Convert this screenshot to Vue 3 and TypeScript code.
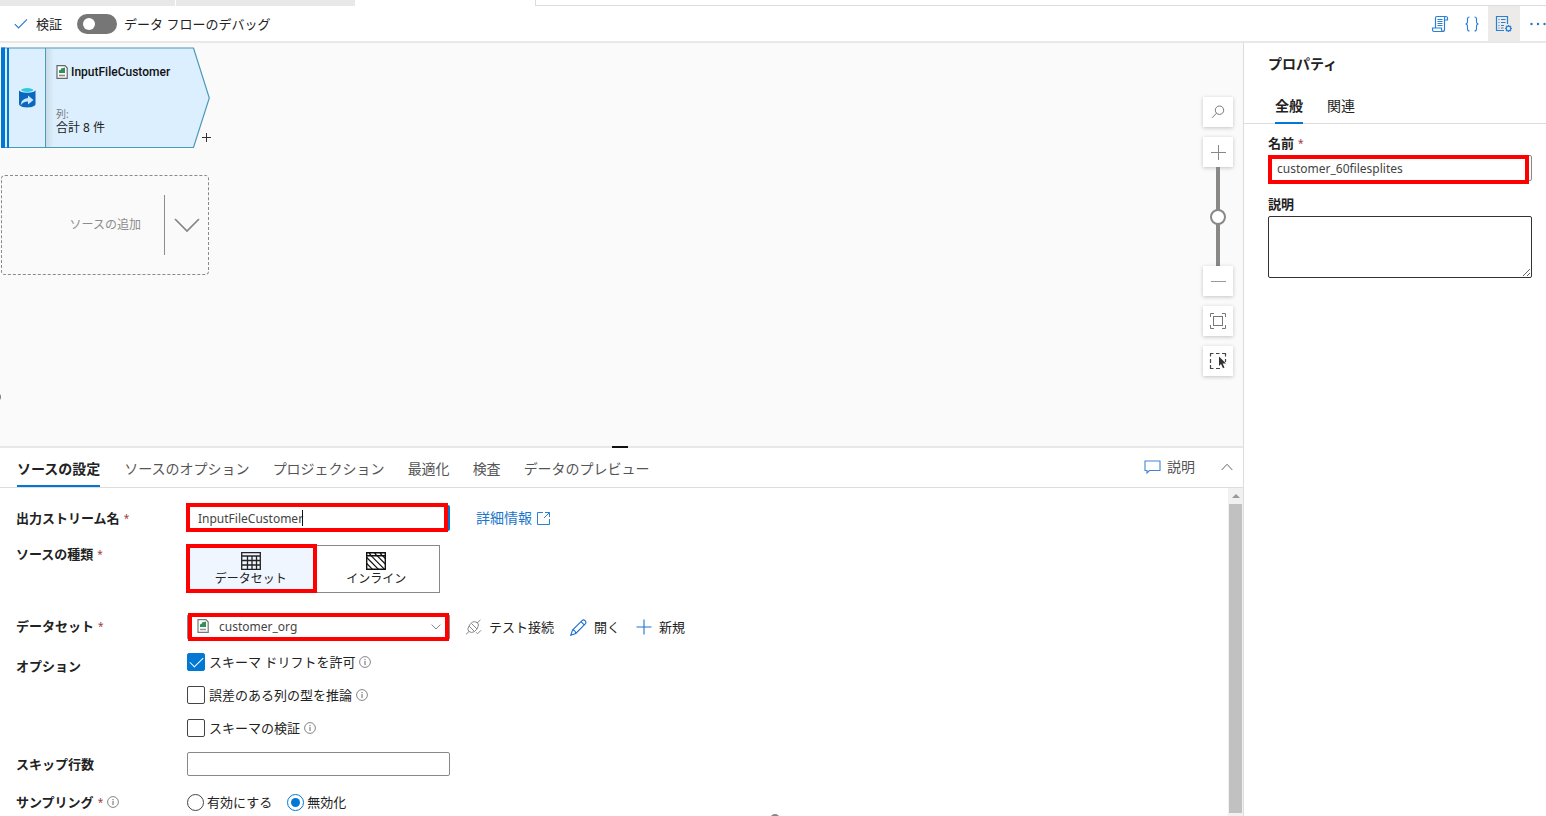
<script setup lang="ts">
import { ref } from 'vue'

const debug = ref(false)
const zoom = ref(50)
const streamName = ref('InputFileCustomer')
const sourceType = ref('dataset')
const dataset = ref('customer_org')
const skipLines = ref('')
const sampling = ref('off')
const flowName = ref('customer_60filesplites')
const description = ref('')
const activeTab = ref('ソースの設定')
const activeProp = ref('全般')

const tabs: string[] = ['ソースの設定', 'ソースのオプション', 'プロジェクション', '最適化', '検査', 'データのプレビュー']
const propTabs: string[] = ['全般', '関連']
const options = ref([
  { id: 'drift', label: 'スキーマ ドリフトを許可', on: true },
  { id: 'infer', label: '誤差のある列の型を推論', on: false },
  { id: 'validate', label: 'スキーマの検証', on: false },
])
</script>

<template>
  <div class="page">
    <div class="strip">
      <span class="strip-tab"></span>
      <span class="strip-tab"></span>
      <span class="strip-tab current"></span>
      <span class="strip-rest"></span>
    </div>

    <header class="toolbar">
      <button class="validate" type="button">
        <svg width="14" height="12" viewBox="0 0 14 12"><path d="M.8 6.2 4.6 10 13 1.4" fill="none" stroke="#2f7cd0" stroke-width="1.2" /></svg>
        検証
      </button>
      <button id="debug" class="switch" type="button" role="switch" :aria-checked="debug" @click="debug = !debug"><i></i></button>
      <label for="debug">データ フローのデバッグ</label>
      <div class="tools">
        <button type="button" aria-label="スクリプト">
          <svg width="18" height="18" viewBox="0 0 18 18" fill="none" stroke="#2b80d2" stroke-width="1.2">
            <path d="M4.500 12.500V3Q4.500 1.500 6 1.500H15.500M13.500 5V14.500Q13.500 16.500 11.500 16.500H3Q1.500 16.500 1.500 14.500V13H10.500V14.500Q10.500 16.500 12 16.500M13.500 5H16.500V3Q16.500 1.500 15 1.500T13.500 3V5" />
            <path d="M6.500 4.500H11.500M6.500 6.500H11.500M6.500 8.500H11.500M6.500 10.500H11.500" />
          </svg>
        </button>
        <button type="button" aria-label="コード">
          <svg width="16" height="18" viewBox="0 0 16 18" fill="none" stroke="#2b80d2" stroke-width="1.1">
            <path d="M5.500 2Q3.500 2 3.500 4V6.500Q3.500 9 1.500 9Q3.500 9 3.500 11.500V14Q3.500 16 5.500 16M10.500 2Q12.500 2 12.500 4V6.500Q12.500 9 14.500 9Q12.500 9 12.500 11.500V14Q12.500 16 10.500 16" />
          </svg>
        </button>
        <button class="active" type="button" aria-label="プロパティ">
          <svg width="18" height="18" viewBox="0 0 18 18" fill="none" stroke="#2b80d2" stroke-width="1.2">
            <path d="M9 15.500H1.500V1.500H12.500V9M3.500 4.500H4.500M6 4.500H10.500M3.500 7.500H4.500M6 7.500H10.500M3.500 10.500H4.500M6 10.500H9M3.500 13H4.500M6 13H8.500" />
            <circle cx="13.500" cy="13.500" r="2.300" />
            <path d="M13.500 10V11.200M13.500 15.800V17M10 13.500H11.200M15.800 13.500H17M11 11 11.900 11.900M15.100 15.100 16 16M16 11 15.100 11.900M11 16 11.900 15.100" />
          </svg>
        </button>
        <button class="more" type="button" aria-label="その他">
          <svg width="16" height="4" viewBox="0 0 16 4" fill="#1b76cc"><circle cx="1.500" cy="2" r="1.200" /><circle cx="8" cy="2" r="1.200" /><circle cx="14.500" cy="2" r="1.200" /></svg>
        </button>
      </div>
    </header>

    <div class="body">
      <main class="work">
        <section class="canvas">
          <div class="node">
            <svg class="node-shape" width="209" height="102" viewBox="0 0 209 102">
              <defs>
                <linearGradient id="fold"><stop offset="0" stop-color="#cbdbe7" /><stop offset="1" stop-color="#dceffe" /></linearGradient>
              </defs>
              <path d="M1 1H192.500L208.300 51 192.500 100.500H1Z" fill="#dceffe" stroke="#4a9ab8" stroke-width="1.200" />
              <path d="M45 2H53V100H45Z" fill="url(#fold)" />
              <path d="M44.500 1V100.500" stroke="#4a9ab8" />
              <path d="M0 .5H4V101H0Z" fill="#0078d4" />
              <path d="M7 1V101" stroke="#0078d4" stroke-width="2" />
              <path d="M18 43.500V57C18 61.500 34.500 61.500 34.500 57V43.500Z" fill="#0b66bd" />
              <ellipse cx="26.200" cy="43" rx="8.200" ry="2.800" fill="#d8f4fc" />
              <ellipse cx="26.200" cy="43" rx="6" ry="1.900" fill="#32c8e4" />
              <path d="M19.500 58.500Q20 51.500 27 51V48.500L32.500 53 27 57.500V54.500Q22 54.500 19.500 58.500Z" fill="#c9e8fb" />
            </svg>
            <div class="node-title">
              <svg class="file" width="12" height="14" viewBox="0 0 12 14"><path d="M1 .7H9L11.200 3V13.300H1Z" fill="#fff" stroke="#666" stroke-width="1.200" /><path d="M3 8V5.500L5 4.500V3.500L9 2.500V8Z" fill="#2f9157" /><path d="M3 10.500H9" stroke="#888" stroke-width="1.600" /></svg>
              InputFileCustomer
            </div>
            <div class="node-info"><small>列:</small><span>合計 8 件</span></div>
            <button class="node-add" type="button" aria-label="追加">
              <svg width="9" height="9" viewBox="0 0 9 9"><path d="M4.500 0V9M0 4.500H9" stroke="#333" /></svg>
            </button>
          </div>

          <button class="add-source" type="button">
            <span>ソースの追加</span>
            <i></i>
            <svg width="26" height="15" viewBox="0 0 26 15"><path d="M1 1 13 13 25 1" fill="none" stroke="#858585" stroke-width="1.700" /></svg>
          </button>

          <span class="knob-left"></span>

          <div class="zoom">
            <button type="button" aria-label="検索">
              <svg width="14" height="14" viewBox="0 0 14 14" fill="none" stroke="#777"><circle cx="8.500" cy="5.200" r="4.200" /><path d="M5.500 8.200 1 12.800" /></svg>
            </button>
            <div class="zoom-bar">
              <button type="button" aria-label="拡大"><svg width="15" height="15" viewBox="0 0 15 15"><path d="M7.500 0V15M0 7.500H15" stroke="#888" /></svg></button>
              <input v-model="zoom" type="range" min="0" max="100" aria-label="ズーム" />
              <button type="button" aria-label="縮小"><svg width="15" height="15" viewBox="0 0 15 15"><path d="M0 7.500H15" stroke="#999" /></svg></button>
            </div>
            <button type="button" aria-label="全体表示">
              <svg width="16" height="16" viewBox="0 0 16 16" fill="none" stroke="#777"><path d="M.5 4V.5H4M12 .5H15.500V4M15.500 12V15.500H12M4 15.500H.5V12" /><rect x="3.500" y="3.500" width="9" height="9" /></svg>
            </button>
            <button type="button" aria-label="範囲選択">
              <svg width="18" height="18" viewBox="0 0 18 18" fill="none" stroke="#444" stroke-width="1.200"><path d="M1.500 4.500V1.500H4.500M7 1.500H10.500M13 1.500H16.500V4.500M16.500 7V10M1.500 7V11M1.500 13V16.500H4.500M7 16.500H11" /><path d="M10 4.500V14L12 12 14 16.300 15.500 15.600 13.700 11.400H17Z" fill="#333" stroke="none" /></svg>
            </button>
          </div>
        </section>

        <section class="panel">
          <span class="grip"></span>
          <nav class="tabs">
            <button v-for="t in tabs" :key="t" type="button" :class="{ on: t === activeTab }" @click="activeTab = t">{{ t }}</button>
            <div class="tabs-end">
              <button type="button">
                <svg width="17" height="14" viewBox="0 0 17 14"><path d="M1 1H16V10.500H5.500L3 13V10.500H1Z" fill="none" stroke="#3d87d6" stroke-width="1.100" /></svg>
                説明
              </button>
              <button type="button" aria-label="折りたたむ"><svg width="12" height="8" viewBox="0 0 12 8"><path d="M.7 7 6 1.300 11.300 7" fill="none" stroke="#666" /></svg></button>
            </div>
          </nav>

          <div class="scroll">
            <form class="form" @submit.prevent>
              <div class="row">
                <label class="name" for="stream">出力ストリーム名 <b>*</b></label>
                <div class="field focus marked"><input id="stream" v-model="streamName" type="text" /><span class="caret"></span></div>
                <a class="info-link" href="#">詳細情報
                  <svg width="13" height="13" viewBox="0 0 13 13" fill="none" stroke="#2b80d2"><path d="M6 .5H.5V12.500H12.500V7M8 .5H12.500V5M12.500.5 7 6" /></svg>
                </a>
              </div>

              <div class="row types-row">
                <span id="type-label" class="name">ソースの種類 <b>*</b></span>
                <div class="types" role="group" aria-labelledby="type-label">
                  <button type="button" class="marked" :class="{ on: sourceType === 'dataset' }" @click="sourceType = 'dataset'">
                    <svg width="20" height="18" viewBox="0 0 20 18" fill="none" stroke="#222" stroke-width="1.300"><path d="M.7.7H19.300V17.300H.7ZM.7 4H19.300M.7 8.500H19.300M.7 13H19.300M6.500 4V17.300M11 4V17.300M15.500 4V17.300" /></svg>
                    データセット
                  </button>
                  <button type="button" :class="{ on: sourceType === 'inline' }" @click="sourceType = 'inline'">
                    <svg width="20" height="18" viewBox="0 0 20 18" fill="none" stroke="#111" stroke-width="1.400"><path d="M.7.7H19.300V17.300H.7ZM.7 3.700H19.300M3 .7 5 3.700M8.500 .7 10.500 3.700M14 .7 16 3.700" /><path stroke-width="1.200" d="M.7 11.500 6.500 17.300M.7 5.500 12.500 17.300M5 3.700 18.600 17.300M11 3.700 19.300 12M16.500 3.700 19.300 6.500" /></svg>
                    インライン
                  </button>
                </div>
              </div>

              <div class="row dataset-row">
                <label class="name" for="dataset">データセット <b>*</b></label>
                <div class="field pick marked">
                  <svg class="file" width="12" height="14" viewBox="0 0 12 14"><path d="M1 .7H9L11.200 3V13.300H1Z" fill="#fff" stroke="#777" stroke-width="1.200" /><path d="M3 8V5.500L5 4.500V3.500L9 2.500V8Z" fill="#2f9157" /><path d="M3 10.500H9" stroke="#999" stroke-width="1.600" /></svg>
                  <select id="dataset" v-model="dataset"><option>customer_org</option></select>
                  <svg class="arrow" width="10" height="6" viewBox="0 0 10 6"><path d="M.6.600 5 5 9.400.6" fill="none" stroke="#888" /></svg>
                </div>
                <div class="actions">
                  <button type="button">
                    <svg width="17" height="16" viewBox="0 0 17 16" fill="none" stroke="#8a8a8a"><path d="M4 7 9.500 12.500Q6.500 14.500 4 12.500T4 7ZM4 7Q7 1.500 11 3T13 7.500Q12.500 10.500 9.500 12.500M6.500 4.500 12 10M12 4 15.500.8M4 12.500 1 15.300M11 13.300 12.500 14.800 16 11.300" /></svg>
                    テスト接続
                  </button>
                  <button type="button">
                    <svg width="17" height="17" viewBox="0 0 17 17" fill="none" stroke="#1b6fd0" stroke-width="1.100"><path d="M.8 16.200 2.500 11 12.300 1.300Q13.500.2 15 1.700T15.500 4.600L5.800 14.400ZM11 2.700 14.200 5.900M2.500 11Q5.300 11 5.800 14.400" /></svg>
                    開く
                  </button>
                  <button type="button">
                    <svg width="16" height="16" viewBox="0 0 16 16"><path d="M8 .5V15.500M.5 8H15.500" stroke="#1b76cc" stroke-width="1.100" /></svg>
                    新規
                  </button>
                </div>
              </div>

              <div class="row options-row">
                <span id="opt-label" class="name">オプション</span>
                <div class="options" role="group" aria-labelledby="opt-label">
                  <div v-for="o in options" :key="o.id" class="option">
                    <input :id="o.id" v-model="o.on" type="checkbox" />
                    <label :for="o.id">{{ o.label }}</label>
                    <svg class="info" width="12" height="12" viewBox="0 0 12 12"><circle cx="6" cy="6" r="5.400" fill="none" stroke="#777" stroke-width=".9" /><path d="M6 5V9M6 3V4.200" stroke="#666" /></svg>
                  </div>
                </div>
              </div>

              <div class="row skip-row">
                <label class="name" for="skip">スキップ行数</label>
                <div class="field"><input id="skip" v-model="skipLines" type="text" /></div>
              </div>

              <div class="row sample-row">
                <span id="sample-label" class="name">サンプリング <b>*</b>
                  <svg class="info" width="12" height="12" viewBox="0 0 12 12"><circle cx="6" cy="6" r="5.400" fill="none" stroke="#777" stroke-width=".9" /><path d="M6 5V9M6 3V4.200" stroke="#666" /></svg>
                </span>
                <div class="radios" role="radiogroup" aria-labelledby="sample-label">
                  <label><input v-model="sampling" type="radio" name="sampling" value="on" />有効にする</label>
                  <label><input v-model="sampling" type="radio" name="sampling" value="off" />無効化</label>
                </div>
              </div>
            </form>
            <div class="bar"><i class="up"></i><i class="thumb"></i></div>
          </div>
          <span class="knob-bottom"></span>
        </section>
      </main>

      <aside class="props">
        <h2>プロパティ</h2>
        <nav class="prop-tabs">
          <button v-for="t in propTabs" :key="t" type="button" :class="{ on: t === activeProp }" @click="activeProp = t">{{ t }}</button>
        </nav>
        <div class="prop-form">
          <label for="flow">名前 <b>*</b></label>
          <div class="field marked"><input id="flow" v-model="flowName" type="text" /></div>
          <label for="desc">説明</label>
          <textarea id="desc" v-model="description"></textarea>
        </div>
      </aside>
    </div>
  </div>
</template>

<style>
body { margin: 0; background: #fff; }
</style>

<style scoped>
* { box-sizing: border-box; }
.page {
  height: 100vh;
  display: flex;
  flex-direction: column;
  overflow: hidden;
  background: #fff;
  color: #222;
  font: 13px/18px "Noto Sans", "Noto Sans CJK JP", sans-serif;
}
button, input, select, textarea { font: inherit; color: inherit; margin: 0; }
button { padding: 0; border: 0; background: none; cursor: pointer; white-space: nowrap; }
svg { display: block; flex: none; }

.strip { display: flex; flex: none; height: 6px; }
.strip-tab { width: 180px; background: #e8e8e8; border-left: 1px solid #fff; }
.strip-tab:first-child { width: 175px; border: 0; }
.strip-tab.current { background: #fff; border-left: 0; }
.strip-rest { flex: 1; border: solid #ddd; border-width: 0 0 1px 1px; }

.toolbar { display: flex; flex: none; align-items: center; height: 37px; padding-left: 14px; border-bottom: 2px solid #e8e8e8; }
.validate { display: flex; align-items: center; gap: 8px; margin-right: 15px; }
.switch { width: 40px; height: 20px; margin-right: 7px; padding: 0 6px; border-radius: 10px; background: #767676; }
.switch i { display: block; width: 12px; height: 12px; border-radius: 50%; background: #fff; }
.tools { display: flex; align-self: stretch; margin-left: auto; }
.tools button { display: grid; place-items: center; width: 32px; }
.tools .active { background: #edebe9; }
.tools .more { justify-items: start; width: 26px; padding-left: 10px; overflow: hidden; }

.body { display: flex; flex: 1; min-height: 0; }
.work { display: flex; flex: 1; flex-direction: column; min-width: 0; }
.canvas { position: relative; flex: 1; min-height: 0; background: #fafafa; }

.node { position: absolute; left: 1px; top: 4px; width: 209px; height: 102px; font-size: 12px; line-height: 14px; }
.node-shape { position: absolute; inset: 0; }
.node-title { position: absolute; left: 55px; top: 18px; display: flex; align-items: center; gap: 3px; color: #111; font-family: Roboto, "Noto Sans", sans-serif; font-weight: 500; }
.node-info { position: absolute; left: 55px; top: 60px; display: flex; flex-direction: column; color: #222; }
.node-info small { font-size: 10px; color: #777; }
.node-add { position: absolute; left: 201px; top: 86px; }

.add-source { position: absolute; left: 1px; top: 132px; display: flex; align-items: center; width: 208px; height: 100px; padding-right: 8px; border: 1px dashed #8a8a8a; border-radius: 4px; color: #8c8c8c; font-size: 12px; }
.add-source span { margin-left: auto; margin-right: 23px; }
.add-source i { width: 1px; height: 60px; margin-right: 9px; background: #8c8c8c; }
.knob-left { position: absolute; left: -9px; top: 349px; width: 10px; height: 10px; border-radius: 50%; background: #777; }

.zoom { position: absolute; right: 10px; top: 54px; display: flex; flex-direction: column; gap: 10px; }
.zoom button { display: grid; place-items: center; width: 30px; height: 30px; background: #fff; box-shadow: 0 1px 4px rgba(0, 0, 0, .22); }
.zoom-bar { display: flex; flex-direction: column; align-items: center; }
.zoom input { writing-mode: vertical-lr; direction: rtl; appearance: none; width: 16px; height: 99px; background: none; }
.zoom input::-webkit-slider-runnable-track { width: 4px; height: 100%; margin: 0 auto; background: #8a8886; }
.zoom input::-webkit-slider-thumb { appearance: none; width: 16px; height: 16px; margin-left: -6px; border: 2px solid #8a8886; border-radius: 50%; background: #fff; }

.panel { position: relative; display: flex; flex: none; flex-direction: column; border-top: 2px solid #e8e8e8; background: #fff; }
.grip { position: absolute; left: 50%; top: -2px; width: 16px; height: 2px; margin-left: -10px; background: #111; }
.tabs { display: flex; gap: 23px; height: 40px; padding-left: 17px; border-bottom: 1px solid #ddd; font-size: 14px; color: #555; }
.tabs button { padding-top: 4px; border-bottom: 2px solid transparent; }
.tabs .on { margin-right: 1px; border-color: #0078d4; color: #222; font-weight: 600; }
.tabs-end { display: flex; align-items: center; gap: 26px; margin-left: auto; padding-right: 10px; }
.tabs-end button { display: flex; align-items: center; gap: 6px; padding: 0; }

.scroll { display: flex; height: 328px; }
.form { flex: 1; min-width: 0; padding: 17px 0 0 16px; overflow: hidden; }
.bar { display: flex; flex-direction: column; align-items: center; width: 15px; background: #f1f1f1; }
.up { margin: 6px 0; border: solid transparent; border-width: 0 4px 4px; border-bottom-color: #999; }
.thumb { flex: 1; width: 13px; margin-bottom: 3px; background: #c1c1c1; }

.row { display: flex; align-items: center; }
.name { display: flex; flex: none; align-items: center; gap: 4px; width: 171px; font-weight: 600; white-space: nowrap; }
b { color: #a4373a; font-size: 10px; font-weight: 400; }
.field { position: relative; width: 263px; height: 26px; }
.field input, .field select { display: block; width: 100%; height: 100%; padding: 0 9px; border: 1px solid #8a8886; border-radius: 2px; outline: 0; background: #fff; color: #444; font-size: 12px; }
.focus input { border: 2px solid #0078d4; }
.marked { position: relative; }
.marked::after { content: ""; position: absolute; inset: -2px 2px -1px -1px; border: 4px solid #f00; pointer-events: none; }
.caret { position: absolute; left: 115px; top: 5px; width: 1px; height: 16px; background: #111; }
.info-link { display: flex; align-items: center; gap: 5px; margin-left: 26px; color: #1b76cc; font-size: 14px; text-decoration: none; }

.types-row { align-items: flex-start; margin-top: 14px; }
.types { display: flex; width: 253px; height: 48px; border: 1px solid #8a8886; }
.types button { display: flex; flex: 1; flex-direction: column; align-items: center; justify-content: center; gap: 1px; font-size: 12px; line-height: 16px; }
.types .on { background: #f0f6ff; }
.types .marked::after { inset: -2px -3px -1px -2px; }

.dataset-row { margin-top: 21px; }
.dataset-row .name { padding-bottom: 3px; }
.pick select { appearance: none; padding-left: 31px; }
.pick .file { position: absolute; left: 10px; top: 5px; }
.pick .arrow { position: absolute; right: 9px; top: 10px; }
.pick::after { inset: -1px 1px -1px 1px; }
.actions { display: flex; gap: 16px; margin-left: 15px; }
.actions button { display: flex; align-items: center; gap: 7px; }

.options-row { align-items: flex-start; margin-top: 13px; }
.options-row .name { padding-top: 4px; }
.options { display: flex; flex-direction: column; gap: 15px; }
.option { display: flex; align-items: center; gap: 4px; height: 18px; }
input[type="checkbox"] { appearance: none; width: 18px; height: 18px; border: 1px solid #444; border-radius: 2px; background: #fff; }
input[type="checkbox"]:checked { display: grid; place-items: center; border-color: #0078d4; background: #0078d4; }
input[type="checkbox"]:checked::before { content: ""; width: 12px; height: 6px; margin-bottom: 4px; border: solid #fff; border-width: 0 0 1px 1px; transform: rotate(-45deg); }

.skip-row { margin-top: 15px; }
.skip-row .field { height: 24px; }
.sample-row { margin-top: 17px; }
.radios { display: flex; gap: 15px; }
.radios label { display: flex; align-items: center; gap: 3px; }
input[type="radio"] { appearance: none; display: grid; place-items: center; width: 17px; height: 17px; border: 1px solid #444; border-radius: 50%; }
input[type="radio"]:checked { border-color: #0078d4; }
input[type="radio"]:checked::before { content: ""; width: 9px; height: 9px; border-radius: 50%; background: #0078d4; }
.knob-bottom { position: absolute; left: 770px; bottom: -8px; width: 10px; height: 10px; border-radius: 50%; background: #888; }

.props { flex: none; width: 303px; border-left: 1px solid #ddd; background: #fff; }
h2 { margin: 0; padding: 11px 24px 0; font-size: 14px; line-height: 20px; font-weight: 600; }
.prop-tabs { display: flex; gap: 24px; height: 50px; padding: 14px 32px 0 31px; border-bottom: 1px solid #ddd; font-size: 14px; }
.prop-tabs button { height: 36px; padding-top: 2px; border-bottom: 2px solid transparent; }
.prop-tabs .on { border-color: #0078d4; font-weight: 600; }
.prop-form { display: flex; flex-direction: column; padding: 10px 14px 0 24px; }
.prop-form label { display: flex; align-items: center; gap: 4px; margin-bottom: 3px; font-weight: 600; }
.prop-form .field { width: 100%; margin-bottom: 14px; }
.prop-form .field input { padding: 0 8px; }
.prop-form .marked::after { inset: 0 3px -3px 0; }
textarea { display: block; height: 62px; border: 1px solid #333; border-radius: 2px; background: #fff; resize: vertical; }
</style>
